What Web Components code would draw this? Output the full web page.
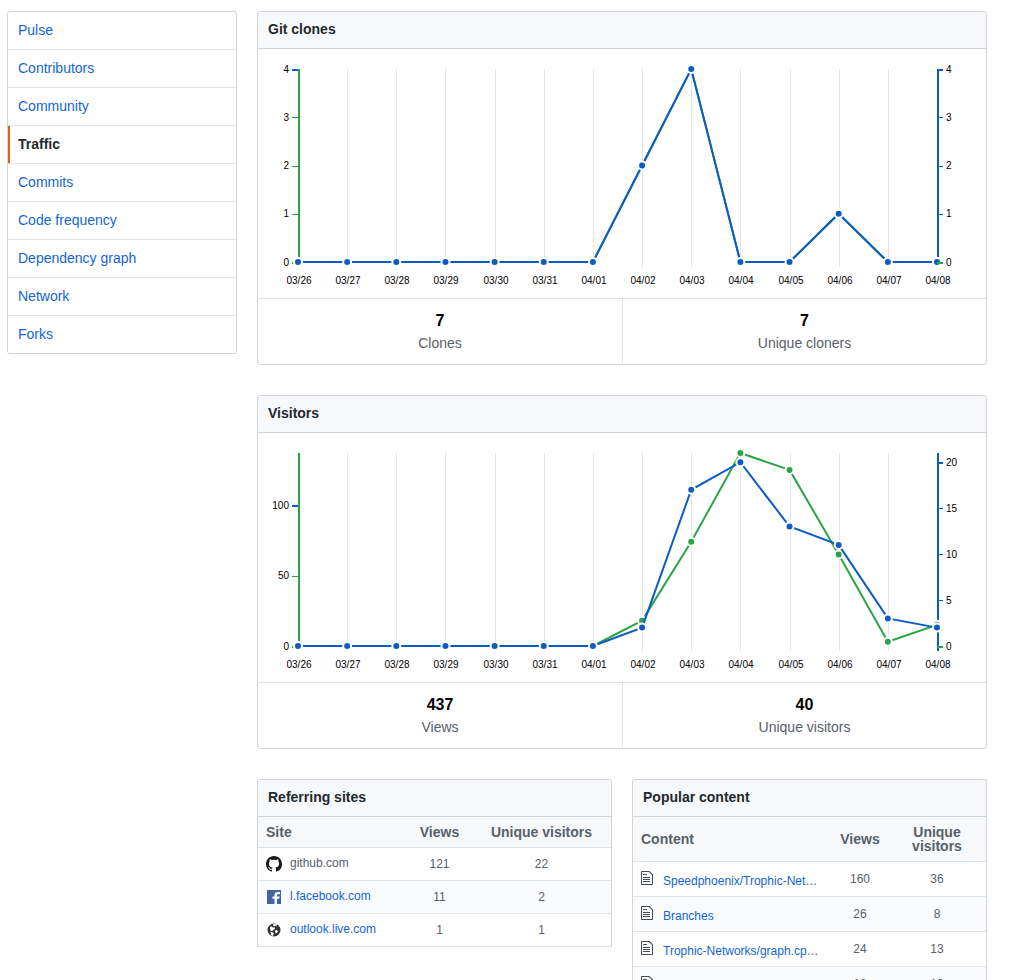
<!DOCTYPE html>
<html lang="en">
<head>
<meta charset="utf-8">
<title>Traffic</title>
<style>
body { margin: 0; background: #fff; color: #24292e; font: 14px/18px "Liberation Sans", Arial, sans-serif; --link: #1265d6; }
</style>
</head>
<body>
<traffic-page></traffic-page>
<script>
const BLUE = '#0d5bc4', GREEN = '#2aa546';

class TrafficPage extends HTMLElement {
  connectedCallback() {
    this.attachShadow({ mode: 'open' }).innerHTML = `
    <style>
      :host { display: flex; align-items: flex-start; gap: 20px; padding: 11px 26px 30px 7px; height: 100vh; box-sizing: border-box; overflow: hidden; }
      side-menu { flex: 0 0 230px; }
      main { flex: 1; min-width: 0; display: grid; gap: 30px; }
      .pair { display: grid; grid-template-columns: 1fr 1fr; gap: 20px; align-items: start; }
    </style>
    <side-menu></side-menu>
    <main>
      <box-panel heading="Git clones">
        <traffic-chart left="0,0,0,0,0,0,0,2,4,0,0,1,0,0" right="0,0,0,0,0,0,0,2,4,0,0,1,0,0"
          left-ticks="0,1,2,3,4" right-ticks="0,1,2,3,4" left-max="4" right-max="4"></traffic-chart>
        <summary-pair><b slot="n1">7</b><span slot="l1">Clones</span><b slot="n2">7</b><span slot="l2">Unique cloners</span></summary-pair>
      </box-panel>
      <box-panel heading="Visitors">
        <traffic-chart left="0,0,0,0,0,0,0,18,74,137,125,65,3,15" right="0,0,0,0,0,0,0,2,17,20,13,11,3,2"
          left-ticks="0,50,100" right-ticks="0,5,10,15,20" left-max="137" right-max="21"></traffic-chart>
        <summary-pair><b slot="n1">437</b><span slot="l1">Views</span><b slot="n2">40</b><span slot="l2">Unique visitors</span></summary-pair>
      </box-panel>
      <div class="pair">
        <box-panel open-end heading="Referring sites"><traffic-table kind="sites"></traffic-table></box-panel>
        <box-panel open-end heading="Popular content"><traffic-table kind="content"></traffic-table></box-panel>
      </div>
    </main>`;
  }
}

class SideMenu extends HTMLElement {
  connectedCallback() {
    const names = ['Pulse', 'Contributors', 'Community', 'Traffic', 'Commits', 'Code frequency', 'Dependency graph', 'Network', 'Forks'];
    this.attachShadow({ mode: 'open' }).innerHTML = `
    <style>
      :host { display: block; box-sizing: border-box; border: 1px solid #d1d5da; border-radius: 3px; overflow: hidden; }
      a { display: block; padding: 9px 10px 10px; color: var(--link); text-decoration: none; border-bottom: 1px solid #e1e4e8; }
      a:last-child { border-bottom: 0; }
      a[aria-current] { font-weight: bold; color: #24292e; box-shadow: inset 2px 0 #e36209; }
    </style>
    <nav aria-label="Insights">${names.map(n => `<a href="#"${n === 'Traffic' ? ' aria-current="page"' : ''}>${n}</a>`).join('')}</nav>`;
  }
}

class BoxPanel extends HTMLElement {
  connectedCallback() {
    this.attachShadow({ mode: 'open' }).innerHTML = `
    <style>
      :host { display: block; min-width: 0; box-sizing: border-box; border: 1px solid #d1d5da; border-radius: 3px; overflow: hidden; }
      :host([open-end]) { border-bottom: 0; border-radius: 3px 3px 0 0; }
      h3 { margin: 0; padding: 8px 10px 10px; font-size: 14px; line-height: 18px; background: #f6f8fa; border-bottom: 1px solid #d1d5da; }
    </style>
    <h3>${this.getAttribute('heading')}</h3><slot></slot>`;
  }
}

class SummaryPair extends HTMLElement {
  connectedCallback() {
    this.attachShadow({ mode: 'open' }).innerHTML = `
    <style>
      :host { display: grid; grid-template-columns: 1fr 1fr; border-top: 1px solid #e1e4e8; text-align: center; color: #586069; }
      div { display: grid; padding: 11px 0 10px; line-height: 22px; }
      div + div { border-left: 1px solid #e1e4e8; }
      ::slotted(b) { font-size: 16px; color: #000; }
    </style>
    <div><slot name="n1"></slot><slot name="l1"></slot></div>
    <div><slot name="n2"></slot><slot name="l2"></slot></div>`;
  }
}

class TrafficChart extends HTMLElement {
  connectedCallback() {
    const nums = a => this.getAttribute(a).split(',').map(Number);
    const days = ['03/26','03/27','03/28','03/29','03/30','03/31','04/01','04/02','04/03','04/04','04/05','04/06','04/07','04/08'];
    const x0 = 40, x1 = 679, top = 20, base = 213, end = 218;
    const X = i => x0 + (x1 - x0) * i / 13;
    const scale = max => v => base - (base - top) * v / max;
    const L = scale(+this.getAttribute('left-max')), R = scale(+this.getAttribute('right-max'));
    const series = (vals, Y, c) => `<polyline points="${vals.map((v, i) => X(i) + ',' + Y(v)).join(' ')}" fill="none" stroke="${c}" stroke-width="2"/>` +
      vals.map((v, i) => `<circle cx="${X(i)}" cy="${Y(v)}" r="4" fill="${c}" stroke="#fff" stroke-width="2"/>`).join('');
    const axis = (ticks, Y, side) => ticks.map((t, i) => {
      const left = side === 'left', y = Math.round(Y(t));
      const strong = i === ticks.length - 1;
      const c = strong ? BLUE : left || t === 0 ? GREEN : BLUE;
      const h = strong || t === 0 ? 2 : 1;
      return `<rect x="${left ? 34 : 679}" y="${y}" width="6" height="${h}" fill="${c}"/>
        <text x="${left ? 31 : 688}" y="${Math.floor(Y(t)) + 4}" text-anchor="${left ? 'end' : 'start'}">${t}</text>`;
    }).join('');
    this.attachShadow({ mode: 'open' }).innerHTML = `
    <style>
      :host { display: block; }
      svg { display: block; width: 100%; }
      text { font: 10px "Liberation Sans", Arial, sans-serif; fill: #000; }
    </style>
    <svg viewBox="0 0 728 249" role="img" aria-label="Traffic by day">
      ${days.map((d, i) => `${i > 0 && i < 13 ? `<rect x="${Math.round(X(i))}" y="${top}" width="1" height="${end - top}" fill="#e5e5e5"/>` : ''}
        <text x="${Math.round(X(i)) + 1}" y="235" text-anchor="middle">${d}</text>`).join('')}
      <rect x="40" y="${top}" width="2" height="${base - top}" fill="${GREEN}"/>
      ${axis(nums('left-ticks'), L, 'left')}
      <rect x="679" y="${top}" width="2" height="${(nums('right').at(-1) ? end : base) - top}" fill="${BLUE}"/>
      ${series(nums('left'), L, GREEN)}
      ${series(nums('right'), R, BLUE)}
      ${axis(nums('right-ticks'), R, 'right')}
    </svg>`;
  }
}

const ICONS = {
  github: `<svg width="16" height="16" viewBox="0 0 16 16"><path fill="#191717" fill-rule="evenodd" d="M8 0C3.58 0 0 3.58 0 8c0 3.54 2.29 6.53 5.47 7.59.4.07.55-.17.55-.38 0-.19-.01-.82-.01-1.49-2.01.37-2.53-.49-2.69-.94-.09-.23-.48-.94-.82-1.13-.28-.15-.68-.52-.01-.53.63-.01 1.08.58 1.23.82.72 1.21 1.87.87 2.33.66.07-.52.28-.87.51-1.07-1.78-.2-3.64-.89-3.64-3.95 0-.87.31-1.59.82-2.15-.08-.2-.36-1.02.08-2.12 0 0 .67-.21 2.2.82.64-.18 1.32-.27 2-.27s1.36.09 2 .27c1.53-1.04 2.2-.82 2.2-.82.44 1.1.16 1.92.08 2.12.51.56.82 1.27.82 2.15 0 3.07-1.87 3.75-3.65 3.95.29.25.54.73.54 1.48 0 1.07-.01 1.93-.01 2.2 0 .21.15.46.55.38A8.01 8.01 0 0 0 16 8c0-4.42-3.58-8-8-8z"/></svg>`,
  facebook: `<svg width="16" height="16" viewBox="0 0 16 16"><path fill="#4862a3" d="M1 1h14v14H1z"/><path fill="#fff" d="M8.500 15V9.700H6.500V7.500h2V6C8.500 4 9.700 3 11.500 3H14v2.200h-1.600C11.300 5.200 11 5.700 11 6.500v1h2.700l-.4 2.200H11V15z"/></svg>`,
  globe: `<svg width="16" height="16" viewBox="0 0 16 16"><circle cx="8" cy="8" r="6.500" fill="#333"/><g fill="#fff"><path d="M7 2.200l3-.2 1.300.8-.8 1.200-1.300-.4-.7.900-1.200-.8z"/><path d="M4.300 4.600l1.500-.2 1 1.200 1.700-.3.6 1.400-1.500 1-1.400 1.400-1.200-.2-.9-1.500z"/><path d="M9.300 8.300l1.800-.2.700 1.300-.8 1.600-1.400.2-.6-1.400z"/><path d="M4.300 9.700l2 .3 1.500 1.600-.5 1.500-.6.900-1.400-.8-.4-1.600z"/></g></svg>`,
  file: `<svg width="12" height="16" viewBox="0 0 12 16"><path fill="#444d56" fill-rule="evenodd" d="M6 5H2V4h4v1zM2 8h7V7H2v1zm0 2h7V9H2v1zm0 2h7v-1H2v1zm10-7.500V14c0 .55-.45 1-1 1H1c-.55 0-1-.45-1-1V2c0-.55.45-1 1-1h7.500L12 4.500zM11 5L8 2H1v12h10V5z"/></svg>`
};

class TrafficTable extends HTMLElement {
  connectedCallback() {
    const sites = this.getAttribute('kind') === 'sites';
    const rows = sites
      ? [['github', 'github.com', 121, 22], ['facebook', 'l.facebook.com', 11, 2], ['globe', 'outlook.live.com', 1, 1]]
      : [['file', 'Speedphoenix/Trophic-Net…', 160, 36], ['file', 'Branches', 26, 8], ['file', 'Trophic-Networks/graph.cp…', 24, 13], ['file', 'Commits', 18, 10]];
    const label = name => name === 'github.com' ? name
      : `<a href="#">${name.replace('…', '')}</a>${name.endsWith('…') ? '…' : ''}`;
    this.attachShadow({ mode: 'open' }).innerHTML = `
    <style>
      :host { display: block; color: #586069; }
      table { width: 100%; table-layout: fixed; border-collapse: separate; border-spacing: 0; font-size: 12px; line-height: 16px; }
      th, td { box-sizing: border-box; padding: 0 8px; text-align: center; font-weight: normal; border-bottom: 1px solid #e1e4e8; vertical-align: middle; }
      th { font-size: 14px; line-height: 14px; font-weight: bold; padding: 8px; background: #f6f8fa; }
      th:first-child, td:first-child { text-align: left; }
      td:first-child { padding-right: 0; }
      tbody tr:nth-child(even) { background: #fafbfc; }
      a { color: var(--link); text-decoration: none; }
      .name { display: flex; gap: 8px; align-items: center; white-space: nowrap; }
      svg { flex: none; display: block; }
      .sites td { height: 33px; }
      .sites .name span { padding-bottom: 2px; }
      .content td { height: 35px; }
      .content .name { gap: 10px; padding-bottom: 2px; }
      .content .name span { padding-top: 5px; }
      .sites col:nth-child(2) { width: 65px; }
      .sites col:nth-child(3) { width: 139px; }
      .content col:nth-child(2) { width: 56px; }
      .content col:nth-child(3) { width: 98px; }
    </style>
    <table class="${sites ? 'sites' : 'content'}">
      <colgroup><col><col><col></colgroup>
      <thead><tr><th>${sites ? 'Site' : 'Content'}</th><th>Views</th><th>Unique visitors</th></tr></thead>
      <tbody>${rows.map(([icon, name, v, u]) => `<tr><td><div class="name">${ICONS[icon]}<span>${label(name)}</span></div></td><td>${v}</td><td>${u}</td></tr>`).join('')}</tbody>
    </table>`;
  }
}

customElements.define('side-menu', SideMenu);
customElements.define('box-panel', BoxPanel);
customElements.define('summary-pair', SummaryPair);
customElements.define('traffic-chart', TrafficChart);
customElements.define('traffic-table', TrafficTable);
customElements.define('traffic-page', TrafficPage);
</script>
</body>
</html>
